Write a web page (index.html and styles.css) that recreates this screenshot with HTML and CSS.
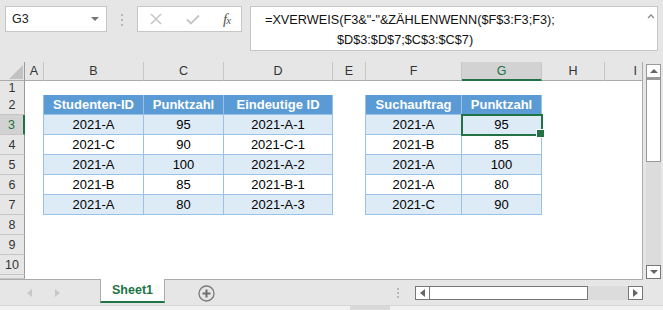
FILE: index.html
```html
<!DOCTYPE html>
<html>
	<head>
		<meta charset="UTF-8">
		<title>Sheet1</title>
		<link rel="stylesheet" href="styles.css">
	</head>
	<body>
		<div class="fbar">
			<div class="namebox"><span>G3</span><span class="dd"></span></div>
			<div class="vdots"><i></i><i></i><i></i></div>
			<div class="fxbox">
				<svg class="ic-x" width="12" height="12" viewBox="0 0 12 12"><path d="M1 1L11 11M11 1L1 11" stroke="#c4c4c4" stroke-width="1.5" fill="none"/></svg>
				<svg class="ic-ok" width="14" height="11" viewBox="0 0 14 11"><path d="M1 5.5L5 9.5L13 1.5" stroke="#c4c4c4" stroke-width="1.8" fill="none"/></svg>
				<span class="fx">f<small>x</small></span>
			</div>
			<div class="formula">
				<div class="ftext">=XVERWEIS(F3&amp;"-"&amp;ZÄHLENWENN($F$3:F3;F3);<br><span class="l2">$D$3:$D$7;$C$3:$C$7)</span></div>
				<svg class="caret" width="8" height="5" viewBox="0 0 8 5"><path d="M1 4L4 1L7 4" stroke="#8a8a8a" stroke-width="1.3" fill="none"/></svg>
			</div>
		</div>

		<div class="main">
			<div class="sheet">
				<div class="row hdr">
					<div class="corner"><span></span></div>
					<div class="ch">A</div><div class="ch">B</div><div class="ch">C</div><div class="ch">D</div>
					<div class="ch">E</div><div class="ch">F</div><div class="ch on">G</div><div class="ch">H</div><div class="ch ci">I</div>
				</div>
				<div class="row r1">
					<div class="rh">1</div><div></div>
					<div class="bt"></div><div class="bt"></div><div class="bt"></div><div></div>
					<div class="bt"></div><div class="bt"></div>
				</div>
				<div class="row">
					<div class="rh">2</div><div class="bl"></div>
					<div class="th">Studenten-ID</div><div class="th">Punktzahl</div><div class="th">Eindeutige ID</div>
					<div class="bl"></div>
					<div class="th">Suchauftrag</div><div class="th">Punktzahl</div>
				</div>
				<div class="row">
					<div class="rh on">3</div><div class="bl"></div>
					<div class="td alt">2021-A</div><div class="td alt">95</div><div class="td alt">2021-A-1</div>
					<div class="bl"></div>
					<div class="td alt">2021-A</div><div class="td alt sel">95</div>
				</div>
				<div class="row">
					<div class="rh">4</div><div class="bl"></div>
					<div class="td">2021-C</div><div class="td">90</div><div class="td">2021-C-1</div>
					<div class="bl"></div>
					<div class="td">2021-B</div><div class="td">85</div>
				</div>
				<div class="row">
					<div class="rh">5</div><div class="bl"></div>
					<div class="td alt">2021-A</div><div class="td alt">100</div><div class="td alt">2021-A-2</div>
					<div class="bl"></div>
					<div class="td alt">2021-A</div><div class="td alt">100</div>
				</div>
				<div class="row">
					<div class="rh">6</div><div class="bl"></div>
					<div class="td">2021-B</div><div class="td">85</div><div class="td">2021-B-1</div>
					<div class="bl"></div>
					<div class="td">2021-A</div><div class="td">80</div>
				</div>
				<div class="row">
					<div class="rh">7</div><div class="bl"></div>
					<div class="td alt">2021-A</div><div class="td alt">80</div><div class="td alt">2021-A-3</div>
					<div class="bl"></div>
					<div class="td alt">2021-C</div><div class="td alt">90</div>
				</div>
				<div class="row"><div class="rh">8</div></div>
				<div class="row"><div class="rh">9</div></div>
				<div class="row"><div class="rh">10</div></div>
				<div class="row r11"><div class="rh"></div></div>
			</div>

			<div class="vscroll">
				<div class="sbtn up"><span class="tri-up"></span></div>
				<div class="vthumb"></div>
				<div class="track"></div>
				<div class="sbtn down"><span class="tri-down"></span></div>
			</div>
		</div>

		<div class="tabbar">
			<div class="nav"><span class="tri-l light"></span><span class="tri-r light"></span></div>
			<div class="tab">Sheet1</div>
			<svg class="add" width="17" height="17" viewBox="0 0 17 17">
				<circle cx="8.5" cy="8.5" r="7.5" stroke="#7a7a7a" stroke-width="1.3" fill="none"/>
				<path d="M8.5 4.5V12.5M4.5 8.5H12.5" stroke="#6e6e6e" stroke-width="2"/>
			</svg>
			<div class="hdots"><i></i><i></i><i></i></div>
			<div class="hscroll">
				<div class="hbtn"><span class="tri-l"></span></div>
				<div class="hthumb"></div>
				<div class="htrack"></div>
				<div class="hbtn"><span class="tri-r"></span></div>
			</div>
		</div>
		<div class="status"><span></span></div>
	</body>
</html>
```

FILE: styles.css
```css
*{
	box-sizing: border-box;
}
body{
	margin: 0;
	width: 663px;
	height: 310px;
	overflow: hidden;
	background: #e6e6e6;
	font-family: "Liberation Sans", Arial, sans-serif;
	color: #000;
}

/* formula bar */
.fbar{
	display: flex;
	align-items: flex-start;
	height: 62px;
	padding: 6px 0 0 5px;
}
.namebox{
	width: 102px;
	height: 26px;
	background: #fff;
	border: 1px solid #c6c6c6;
	display: flex;
	align-items: center;
	justify-content: space-between;
	padding: 0 6px 0 6px;
	font-size: 12.5px;
	color: #222;
}
.dd{
	width: 0;
	height: 0;
	border-left: 4px solid transparent;
	border-right: 4px solid transparent;
	border-top: 4px solid #777;
	margin-right: 1px;
}
.vdots{
	width: 30px;
	display: flex;
	flex-direction: column;
	align-items: center;
	gap: 3px;
	padding-top: 8px;
}
.vdots i, .hdots i{
	display: block;
	width: 2px;
	height: 2px;
	background: #b8b8b8;
}
.fxbox{
	width: 105px;
	height: 26px;
	background: #fff;
	border: 1px solid #c6c6c6;
	display: flex;
	align-items: center;
	padding-left: 12px;
}
.ic-ok{
	margin-left: 24px;
}
.fx{
	margin-left: 23px;
	font-family: "Liberation Serif", serif;
	font-style: italic;
	font-size: 15px;
	color: #555;
	letter-spacing: -1px;
}
.fx small{
	font-size: 11px;
}
.formula{
	margin-left: 8px;
	width: 408px;
	height: 45px;
	background: #fff;
	border: 1px solid #c6c6c6;
	display: flex;
	justify-content: space-between;
	align-items: flex-start;
	padding: 3px 2px 0 14px;
	font-size: 12.7px;
	line-height: 20px;
	color: #111;
}
.l2{
	padding-left: 72px;
}
.caret{
	margin-top: 4px;
}

/* grid */
.main{
	display: flex;
	height: 218px;
}
.sheet{
	width: 643px;
	height: 218px;
	overflow: hidden;
	background: #fff;
	border-right: 1px solid #ababab;
	border-bottom: 1px solid #ababab;
}
.row{
	display: grid;
	grid-template-columns: 25px 19px 100px 80px 109px 33px 96px 80px 63px 37px;
	height: 20px;
	font-size: 13px;
}
.row > div{
	display: flex;
	align-items: center;
	justify-content: center;
	white-space: nowrap;
}
.hdr{
	height: 19px;
	background: #e6e6e6;
}
.r1{
	height: 14px;
}
.r11{
	height: 4px;
}
.corner{
	position: relative;
	border-right: 1px solid #9b9b9b;
	border-bottom: 1px solid #ababab;
}
.corner span{
	position: absolute;
	right: 1px;
	bottom: 1px;
	width: 14px;
	height: 14px;
	background: #c2c2c2;
	clip-path: polygon(100% 0, 100% 100%, 0 100%);
}
.ch{
	border-right: 1px solid #c6c6c6;
	border-bottom: 1px solid #ababab;
	font-size: 12.5px;
	color: #333;
}
.ch.ci{
	justify-content: flex-end;
	padding-right: 5px;
	border-right: 0;
}
.ch.on{
	background: #d2d2d2;
	color: #217346;
	border-bottom: 2px solid #217346;
}
.rh{
	background: #e6e6e6;
	border-right: 1px solid #9b9b9b;
	border-bottom: 1px solid #c6c6c6;
	font-size: 12.5px;
	color: #333;
}
.rh.on{
	background: #d2d2d2;
	color: #217346;
	border-right: 2px solid #217346;
}

/* tables */
.bt{
	border-bottom: 1px solid #9bc2e6;
}
.bl{
	border-right: 1px solid #9bc2e6;
}
.th{
	background: #5b9bd5;
	color: #fff;
	font-weight: bold;
	border-right: 1px solid #9bc2e6;
	border-bottom: 1px solid #9bc2e6;
}
.td{
	border-right: 1px solid #9bc2e6;
	border-bottom: 1px solid #9bc2e6;
}
.alt{
	background: #ddebf7;
}
.sel{
	position: relative;
	outline: 2px solid #217346;
	outline-offset: -1px;
}
.sel::after{
	content: "";
	position: absolute;
	right: -4px;
	bottom: -4px;
	width: 7px;
	height: 7px;
	background: #217346;
	border: 1px solid #fff;
}

/* vertical scrollbar */
.vscroll{
	margin: 2px 0 0 3px;
	width: 15px;
	height: 215px;
	display: flex;
	flex-direction: column;
	background: #dcdcdc;
}
.sbtn{
	height: 14px;
	background: #fff;
	border: 1px solid #9a9a9a;
	display: flex;
	align-items: center;
	justify-content: center;
}
.sbtn.down{
	border-color: #777;
}
.vthumb{
	height: 84px;
	background: #fff;
	border: 1px solid #9a9a9a;
	border-top-width: 2px;
}
.track{
	flex: 1;
}
.tri-up, .tri-down{
	width: 0;
	height: 0;
	border-left: 4px solid transparent;
	border-right: 4px solid transparent;
}
.tri-up{
	border-bottom: 4px solid #666;
}
.tri-down{
	border-top: 4px solid #666;
}
.tri-l, .tri-r{
	width: 0;
	height: 0;
	border-top: 4px solid transparent;
	border-bottom: 4px solid transparent;
}
.tri-l{
	border-right: 5px solid #666;
}
.tri-r{
	border-left: 5px solid #666;
}
.tri-l.light{
	border-right-color: #c8c8c8;
}
.tri-r.light{
	border-left-color: #c8c8c8;
}

/* sheet tabs */
.tabbar{
	display: flex;
	align-items: flex-start;
	height: 25px;
}
.nav{
	width: 100px;
	height: 25px;
	display: flex;
	align-items: center;
	gap: 23px;
	padding-left: 27px;
}
.tab{
	width: 65px;
	height: 24px;
	margin-top: -1px;
	background: #fff;
	border-left: 1px solid #ababab;
	border-right: 1px solid #ababab;
	border-bottom: 2px solid #217346;
	display: flex;
	align-items: center;
	justify-content: center;
	font-size: 12.5px;
	font-weight: bold;
	color: #217346;
}
.add{
	margin: 5px 0 0 33px;
}
.hdots{
	margin: 8px 0 0 182px;
	display: flex;
	flex-direction: column;
	gap: 2px;
}
.hscroll{
	margin: 6px 0 0 16px;
	width: 228px;
	height: 14px;
	display: flex;
	background: #dcdcdc;
}
.hbtn{
	width: 15px;
	height: 14px;
	background: #fff;
	border: 1px solid #777;
	display: flex;
	align-items: center;
	justify-content: center;
}
.hthumb{
	width: 158px;
	background: #fff;
	border: 1px solid #777;
	border-left: 0;
}
.htrack{
	flex: 1;
}
.status{
	height: 5px;
	background: #f1f1f1;
	border-top: 1px solid #d6d6d6;
	padding-left: 350px;
}
.status span{
	display: block;
	width: 40px;
	height: 4px;
	background: #d9d9d9;
}
```
